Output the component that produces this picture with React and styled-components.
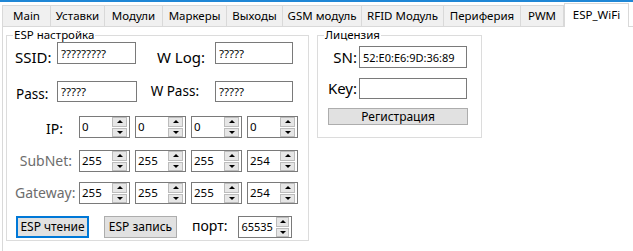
import React from 'react';
import styled, { createGlobalStyle } from 'styled-components';

const Global = createGlobalStyle`
  html, body { margin: 0; padding: 0; background: #fff; }
  body {
    width: 633px; height: 251px; overflow: hidden;
    font-family: "Noto Sans", "Open Sans", sans-serif; color: #000;
  }
  #root { width: 633px; height: 251px; }
`;

const Window = styled.div`
  width: 633px;
  height: 251px;
  box-sizing: border-box;
  display: flex;
  flex-direction: column;
  background: #fff;
  border-top: 2px solid #1f87d6;
`;

const TabStrip = styled.div`
  display: flex;
  align-items: flex-end;
  height: 24px;
  padding-left: 2px;
  box-sizing: border-box;
  position: relative;
  z-index: 1;
`;

const Tab = styled.div`
  width: ${p => p.$w}px;
  height: ${p => (p.$active ? 24 : 21)}px;
  margin-right: -1px;
  margin-left: ${p => (p.$active ? 1 : 0)}px;
  margin-bottom: ${p => (p.$active ? -1 : 0)}px;
  box-sizing: border-box;
  border: 1px solid #d9d9d9;
  border-bottom: none;
  background: ${p => (p.$active ? '#fff' : '#f0f0f0')};
  font-size: 11.5px;
  line-height: ${p => (p.$active ? 21 : 19)}px;
  text-align: center;
  white-space: nowrap;
  color: #000;
`;

const Page = styled.div`
  flex: 1;
  margin-left: 2px;
  border-top: 1px solid #d9d9d9;
  border-left: 1px solid #d9d9d9;
  display: flex;
  align-items: flex-start;
  padding: 1px 0 0 3px;
`;

const Group = styled.fieldset`
  margin: 0 0 0 ${p => p.$ml || 0}px;
  padding: 0;
  width: ${p => p.$w}px;
  height: ${p => p.$h}px;
  box-sizing: border-box;
  border: 1px solid #dcdcdc;
  min-width: 0;
`;

const Legend = styled.legend`
  margin-left: 6px;
  padding: 0 1px;
  font-size: 11.5px;
  line-height: 14px;
  color: #000;
`;

const Content = styled.div`
  display: flex;
  flex-direction: column;
  padding-left: ${p => p.$pl}px;
`;

const Row = styled.div`
  display: flex;
  align-items: flex-start;
  margin-top: ${p => p.$mt || 0}px;
`;

const Label = styled.div`
  width: ${p => (p.$w ? `${p.$w}px` : 'auto')};
  box-sizing: border-box;
  padding: ${p => p.$pt || 0}px ${p => p.$pr || 0}px 0 ${p => p.$pl || 0}px;
  margin-left: ${p => p.$ml || 0}px;
  margin-top: ${p => p.$mt || 0}px;
  text-align: ${p => (p.$right ? 'right' : 'left')};
  font-size: ${p => p.$size}px;
  line-height: ${p => p.$lh || 22}px;
  color: ${p => (p.$muted ? '#6d6d6d' : '#000')};
  white-space: nowrap;
`;

const TextBox = styled.input`
  width: ${p => p.$w}px;
  height: ${p => p.$h}px;
  box-sizing: border-box;
  margin: 0;
  padding: 0 ${p => p.$px ?? 3}px;
  border: 1px solid #7a7a7a;
  border-radius: 0;
  background: #fff;
  font-family: "Noto Sans", sans-serif;
  font-size: ${p => p.$fs || 11.5}px;
  color: #000;
  outline: none;
  overflow: hidden;
`;

const SpinGroup = styled.div`
  display: flex;
  gap: 5px;
`;

const SpinBox = styled.div`
  width: ${p => p.$w}px;
  height: 22px;
  margin-left: ${p => p.$ml || 0}px;
  box-sizing: border-box;
  border: 1px solid #7a7a7a;
  background: #fff;
  display: flex;
`;

const SpinValue = styled.div`
  flex: 1;
  padding-left: ${p => p.$pl}px;
  font-size: ${p => p.$fs}px;
  line-height: 20px;
  color: #000;
  overflow: hidden;
  white-space: nowrap;
`;

const SpinButtons = styled.div`
  width: ${p => p.$w}px;
  margin-right: 2px;
  display: flex;
  flex-direction: column;
  gap: 1px;
`;

const SpinBtn = styled.div`
  flex: 1;
  box-sizing: border-box;
  background: #e6e6e6;
  border: 1px solid #bcbcbc;
  display: flex;
  align-items: center;
  justify-content: center;
`;

const Arrow = styled.span`
  width: 0;
  height: 0;
  border-left: 3px solid transparent;
  border-right: 3px solid transparent;
  ${p => (p.$down ? 'border-top: 3px solid #000;' : 'border-bottom: 3px solid #000;')}
`;

const Button = styled.button`
  width: ${p => p.$w}px;
  height: ${p => p.$h}px;
  margin: 0 0 0 ${p => p.$ml || 0}px;
  padding: 0;
  box-sizing: border-box;
  background: #e1e1e1;
  border: ${p => (p.$focused ? '2px solid #0078d7' : '1px solid #adadad')};
  border-radius: 0;
  font-family: "Noto Sans", sans-serif;
  font-size: 12px;
  color: #000;
  line-height: 1;
  white-space: nowrap;
`;

const tabs = [
  ['Main', 49],
  ['Уставки', 55],
  ['Модули', 59],
  ['Маркеры', 65],
  ['Выходы', 57],
  ['GSM модуль', 80],
  ['RFID Модуль', 83],
  ['Периферия', 78],
  ['PWM', 44],
];

function Spinner({ value, w = 51, ml, fs = 11.5, pl = 2, bw = 15 }) {
  return (
    <SpinBox $w={w} $ml={ml}>
      <SpinValue $fs={fs} $pl={pl}>{value}</SpinValue>
      <SpinButtons $w={bw}>
        <SpinBtn><Arrow /></SpinBtn>
        <SpinBtn><Arrow $down /></SpinBtn>
      </SpinButtons>
    </SpinBox>
  );
}

function AddressRow({ label, values, mt, pr, pt, muted }) {
  return (
    <Row $mt={mt}>
      <Label $w={64} $right $pr={pr} $pt={pt} $size={14} $muted={muted}>{label}</Label>
      <SpinGroup>
        {values.map((v, i) => <Spinner key={i} value={v} />)}
      </SpinGroup>
    </Row>
  );
}

export default function App() {
  return (
    <>
      <Global />
      <Window>
        <TabStrip>
          {tabs.map(([t, w]) => <Tab key={t} $w={w}>{t}</Tab>)}
          <Tab $w={65} $active>ESP_WiFi</Tab>
        </TabStrip>
        <Page>
          <Group $w={303} $h={213}>
            <Legend>ESP настройка</Legend>
            <Content $pl={8}>
              <Row>
                <Label $w={42} $pt={4} $size={15}>SSID:</Label>
                <TextBox $w={79} $h={22} defaultValue="?????????" readOnly />
                <Label $w={79} $right $pr={10} $pt={4} $size={15}>W Log:</Label>
                <TextBox $w={78} $h={22} defaultValue="?????" readOnly />
              </Row>
              <Row $mt={13}>
                <Label $w={42} $pl={1} $pt={3} $lh={21} $size={13.5}>Pass:</Label>
                <TextBox $w={80} $h={21} defaultValue="?????" readOnly />
                <Label $w={78} $right $pr={16} $lh={21} $size={13.5}>W Pass:</Label>
                <TextBox $w={78} $h={21} defaultValue="?????" readOnly />
              </Row>
              <AddressRow label="IP:" values={['0', '0', '0', '0']} mt={11} pr={16} pt={2} />
              <AddressRow label="SubNet:" values={['255', '255', '255', '254']} mt={10} pr={7} muted />
              <AddressRow label="Gateway:" values={['255', '255', '255', '254']} mt={10} pr={4} muted />
              <Row $mt={12}>
                <Button $w={73} $h={22} $ml={1} $focused>ESP чтение</Button>
                <Button $w={73} $h={22} $ml={15}>ESP запись</Button>
                <Label $ml={15} $mt={-1} $size={14}>порт:</Label>
                <Spinner value="65535" w={54} ml={11} fs={11} pl={2} bw={13} />
              </Row>
            </Content>
          </Group>
          <Group $w={165} $h={110} $ml={8}>
            <Legend>Лицензия</Legend>
            <Content $pl={0}>
              <Row $mt={4}>
                <Label $w={41} $right $pr={2} $size={15}>SN:</Label>
                <TextBox $w={108} $h={22} $fs={11} $px={3} defaultValue="52:E0:E6:9D:36:89" readOnly />
              </Row>
              <Row $mt={10}>
                <Label $w={41} $right $pr={2} $lh={21} $size={15}>Key:</Label>
                <TextBox $w={108} $h={21} defaultValue="" readOnly />
              </Row>
              <Row $mt={9}>
                <Button $w={140} $h={17} $ml={10}>Регистрация</Button>
              </Row>
            </Content>
          </Group>
        </Page>
      </Window>
    </>
  );
}
